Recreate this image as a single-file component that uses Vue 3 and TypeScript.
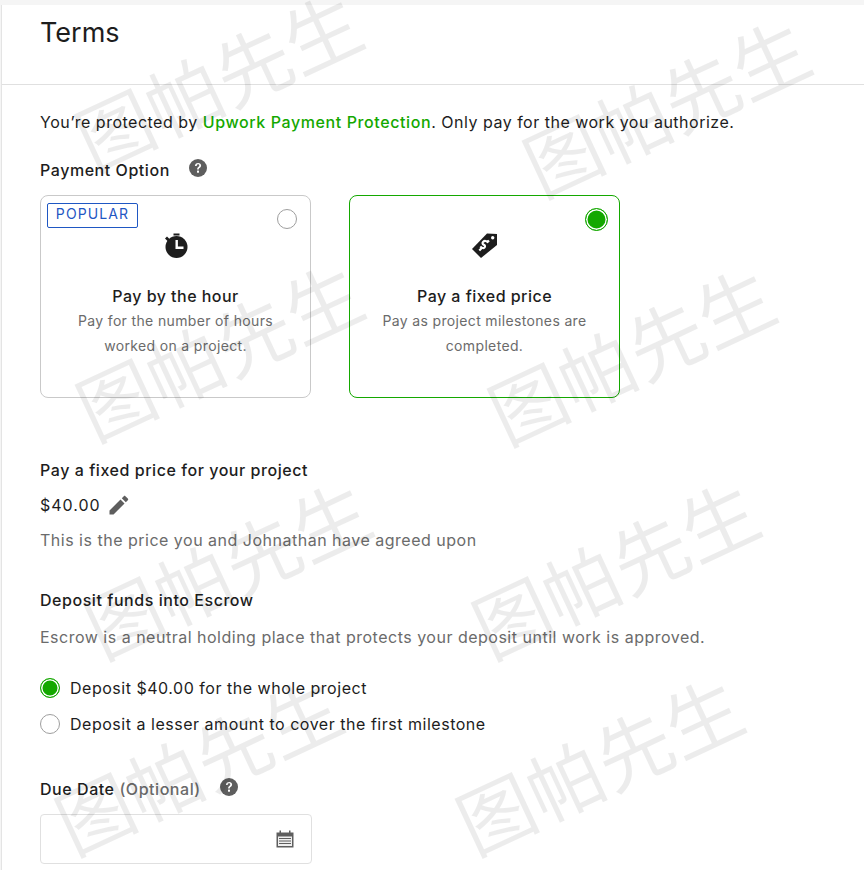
<script setup lang="ts">
interface Watermark {
  x: number
  y: number
}

const watermarks: Watermark[] = [
  { x: 217, y: 78 },
  { x: 665, y: 104 },
  { x: 218, y: 348 },
  { x: 630, y: 352 },
  { x: 226, y: 566 },
  { x: 614, y: 566 },
  { x: 197, y: 762 },
  { x: 598, y: 762 }
]
</script>

<template>
  <div class="page">
    <section class="terms">
      <header class="terms-head">
        <h1>Terms</h1>
      </header>

      <div class="terms-body">
        <p class="protected">
          You’re protected by <a class="link">Upwork Payment Protection</a>. Only pay for the work you authorize.
        </p>

        <div class="label-row option-label">
          <span class="label">Payment Option</span>
          <svg class="help" viewBox="0 0 18 18" width="18" height="18">
            <circle cx="9" cy="9" r="9" fill="#5e5e5e" />
            <path d="M5.900 7c.1-2 1.400-3.100 3.200-3.100 1.800 0 3 1.100 3 2.600 0 1.200-.7 1.800-1.500 2.400-.6.400-.8.700-.8 1.500H8.100c0-1.300.4-1.900 1.200-2.500.6-.4 1-.8 1-1.500 0-.7-.5-1.200-1.200-1.200-.8 0-1.300.5-1.400 1.800z" fill="#fff" />
            <rect x="8" y="11.600" width="2" height="2.100" fill="#fff" />
          </svg>
        </div>

        <div class="options">
          <div class="option">
            <span class="popular">POPULAR</span>
            <span class="radio corner"></span>
            <svg class="option-icon" viewBox="0 0 24 26" width="24" height="26">
              <rect x="9.500" y="0.500" width="6" height="2" fill="#1d1d1d" />
              <path d="M1 5.500l2-2 3 3-2 2z" fill="#1d1d1d" />
              <circle cx="12.500" cy="14" r="11" fill="#1d1d1d" />
              <path d="M11.500 7h2.400v6.600h5.600V16h-8z" fill="#fff" />
            </svg>
            <h3>Pay by the hour</h3>
            <p>Pay for the number of hours<br />worked on a project.</p>
          </div>

          <div class="option selected">
            <span class="radio on corner"></span>
            <svg class="option-icon" viewBox="0 0 26 26" width="26" height="26">
              <path d="M0 16L15 0.500 25 1v11L9 25z" fill="#1d1d1d" />
              <circle cx="20.700" cy="4.700" r="1.700" fill="#fff" />
              <path d="M16 9.500c-1.600-1.800-3.500-2-4.800-.8-1.100 1.100-.7 2.400.6 3.100 1.300.7 1.600 1.800.7 2.700-1 .9-2.600.6-4.200-1M17 7.500l-2 2M9.300 15.500l-2 2" fill="none" stroke="#fff" stroke-width="2.200" />
            </svg>
            <h3>Pay a fixed price</h3>
            <p>Pay as project milestones are<br />completed.</p>
          </div>
        </div>

        <div class="label fixed-label">Pay a fixed price for your project</div>
        <div class="price">
          <span>$40.00</span>
          <svg viewBox="0 0 20 20" width="20" height="20">
            <path d="M0.500 15.500v4h4L15.500 8.500l-4-4zM12.800 3.200l4 4 2-2c.5-.5.500-1.100 0-1.600L16.400 1.200c-.5-.5-1.100-.5-1.600 0z" fill="#5e5e5e" />
          </svg>
        </div>
        <p class="muted agreed">This is the price you and Johnathan have agreed upon</p>

        <div class="label deposit-label">Deposit funds into Escrow</div>
        <p class="muted escrow">Escrow is a neutral holding place that protects your deposit until work is approved.</p>

        <div class="choices">
          <div class="choice">
            <span class="radio on"></span>
            <span>Deposit $40.00 for the whole project</span>
          </div>
          <div class="choice">
            <span class="radio"></span>
            <span>Deposit a lesser amount to cover the first milestone</span>
          </div>
        </div>

        <div class="label-row due-label">
          <span class="label">Due Date <span class="optional">(Optional)</span></span>
          <svg class="help" viewBox="0 0 18 18" width="18" height="18">
            <circle cx="9" cy="9" r="9" fill="#5e5e5e" />
            <path d="M5.900 7c.1-2 1.400-3.100 3.200-3.100 1.800 0 3 1.100 3 2.600 0 1.200-.7 1.800-1.500 2.400-.6.400-.8.700-.8 1.500H8.100c0-1.300.4-1.900 1.200-2.500.6-.4 1-.8 1-1.500 0-.7-.5-1.200-1.200-1.200-.8 0-1.300.5-1.400 1.800z" fill="#fff" />
            <rect x="8" y="11.600" width="2" height="2.100" fill="#fff" />
          </svg>
        </div>

        <div class="date-input">
          <svg viewBox="0 0 18 18" width="18" height="18">
            <path d="M0.500 2.500h17v15h-17z" fill="#5e5e5e" />
            <rect x="3.500" y="0.500" width="1.500" height="3" fill="#5e5e5e" />
            <rect x="13" y="0.500" width="1.500" height="3" fill="#5e5e5e" />
            <rect x="2" y="6.500" width="14" height="9.500" fill="#efefef" />
            <path d="M3 8.500h12M3 11h12M3 13.500h12" stroke="#5e5e5e" stroke-width="1" />
          </svg>
        </div>
      </div>
    </section>

    <span
      v-for="(mark, index) in watermarks"
      :key="index"
      class="watermark"
      :style="{ left: `${mark.x}px`, top: `${mark.y}px` }"
    >图帕先生</span>
  </div>
</template>

<style scoped>
.page {
  position: relative;
  width: 864px;
  height: 870px;
  overflow: hidden;
  background: #f5f5f5;
  padding-top: 5px;
  box-sizing: border-box;
  font-family: Inter, "Liberation Sans", sans-serif;
  color: #1d1d1d;
}

.terms {
  height: 865px;
  margin-left: 1px;
  background: #fff;
  border-left: 1px solid #e4e4e4;
  box-sizing: border-box;
}

.terms-head {
  height: 80px;
  box-sizing: border-box;
  border-bottom: 1px solid #e0e0e0;
  padding: 12px 38px 0;
}

h1 {
  margin: 0;
  font-size: 27px;
  line-height: 32px;
  font-weight: 400;
}

.terms-body {
  padding: 0 38px;
}

.protected {
  margin: 25px 0 0;
  font-size: 16px;
  line-height: 24px;
  letter-spacing: 0.5px;
}

.link {
  color: #14a800;
  font-weight: 500;
  letter-spacing: 0.6px;
}

.label-row {
  display: flex;
  align-items: center;
}

.label {
  font-size: 16px;
  line-height: 24px;
  font-weight: 500;
  letter-spacing: 0.55px;
}

.option-label {
  margin-top: 24px;
  gap: 19px;
}

.option-label .help {
  margin-top: -4px;
}

.options {
  display: flex;
  gap: 38px;
  margin-top: 13px;
}

.option {
  position: relative;
  width: 271px;
  height: 203px;
  box-sizing: border-box;
  border: 1px solid #c9c9c9;
  border-radius: 8px;
  text-align: center;
  padding-top: 37px;
}

.option.selected {
  border-color: #14a800;
}

.option-icon {
  display: block;
  margin: 0 auto;
}

.option h3 {
  margin: 26px 0 0;
  font-size: 16px;
  line-height: 22px;
  font-weight: 500;
  letter-spacing: 0.47px;
}

.option p {
  margin: 1px 0 0;
  font-size: 14px;
  line-height: 25px;
  letter-spacing: 0.35px;
  color: #6b6b6b;
}

.popular {
  position: absolute;
  left: 6px;
  top: 7px;
  width: 91px;
  height: 25px;
  box-sizing: border-box;
  border: 1px solid #1f57c3;
  border-radius: 2px;
  color: #1f57c3;
  font-size: 14px;
  line-height: 20px;
  letter-spacing: 1.1px;
}

.radio {
  display: block;
  flex: none;
  width: 20px;
  height: 20px;
  box-sizing: border-box;
  border: 1px solid #9e9e9e;
  border-radius: 50%;
  background: #fff;
}

.radio.on {
  border-color: #14a800;
  background: #14a800;
  box-shadow: inset 0 0 0 1.500px #fff;
}

.radio.corner {
  position: absolute;
  right: 13px;
  top: 13px;
}

.radio.on.corner {
  width: 23px;
  height: 23px;
  right: 11.500px;
  top: 11.500px;
  border-width: 1.500px;
}

.fixed-label {
  margin-top: 60px;
}

.price {
  display: flex;
  align-items: center;
  gap: 8px;
  margin-top: 11px;
  font-size: 16px;
  line-height: 24px;
  letter-spacing: 1px;
}

.muted {
  color: #6b6b6b;
  font-size: 16px;
  line-height: 24px;
  letter-spacing: 0.5px;
}

.agreed {
  margin: 11px 0 0;
}

.deposit-label {
  margin-top: 36px;
}

.escrow {
  margin: 13px 0 0;
}

.choices {
  display: flex;
  flex-direction: column;
  gap: 16px;
  margin-top: 29px;
}

.choice {
  display: flex;
  align-items: center;
  gap: 10px;
  font-size: 16px;
  line-height: 20px;
  letter-spacing: 0.52px;
}

.due-label {
  margin-top: 43px;
  gap: 19px;
}

.due-label .help {
  margin-top: -4px;
}

.optional {
  color: #6b6b6b;
}

.date-input {
  display: flex;
  align-items: center;
  justify-content: flex-end;
  width: 272px;
  height: 50px;
  margin-top: 13px;
  padding-right: 17px;
  box-sizing: border-box;
  border: 1px solid #e0e0e0;
  border-radius: 4px;
}

.watermark {
  position: absolute;
  transform: translate(-50%, -50%) rotate(-25deg);
  white-space: nowrap;
  font-family: "Noto Sans CJK SC", sans-serif;
  font-size: 76px;
  line-height: 1;
  font-weight: 400;
  color: rgba(0, 0, 0, 0.075);
  pointer-events: none;
}
</style>
